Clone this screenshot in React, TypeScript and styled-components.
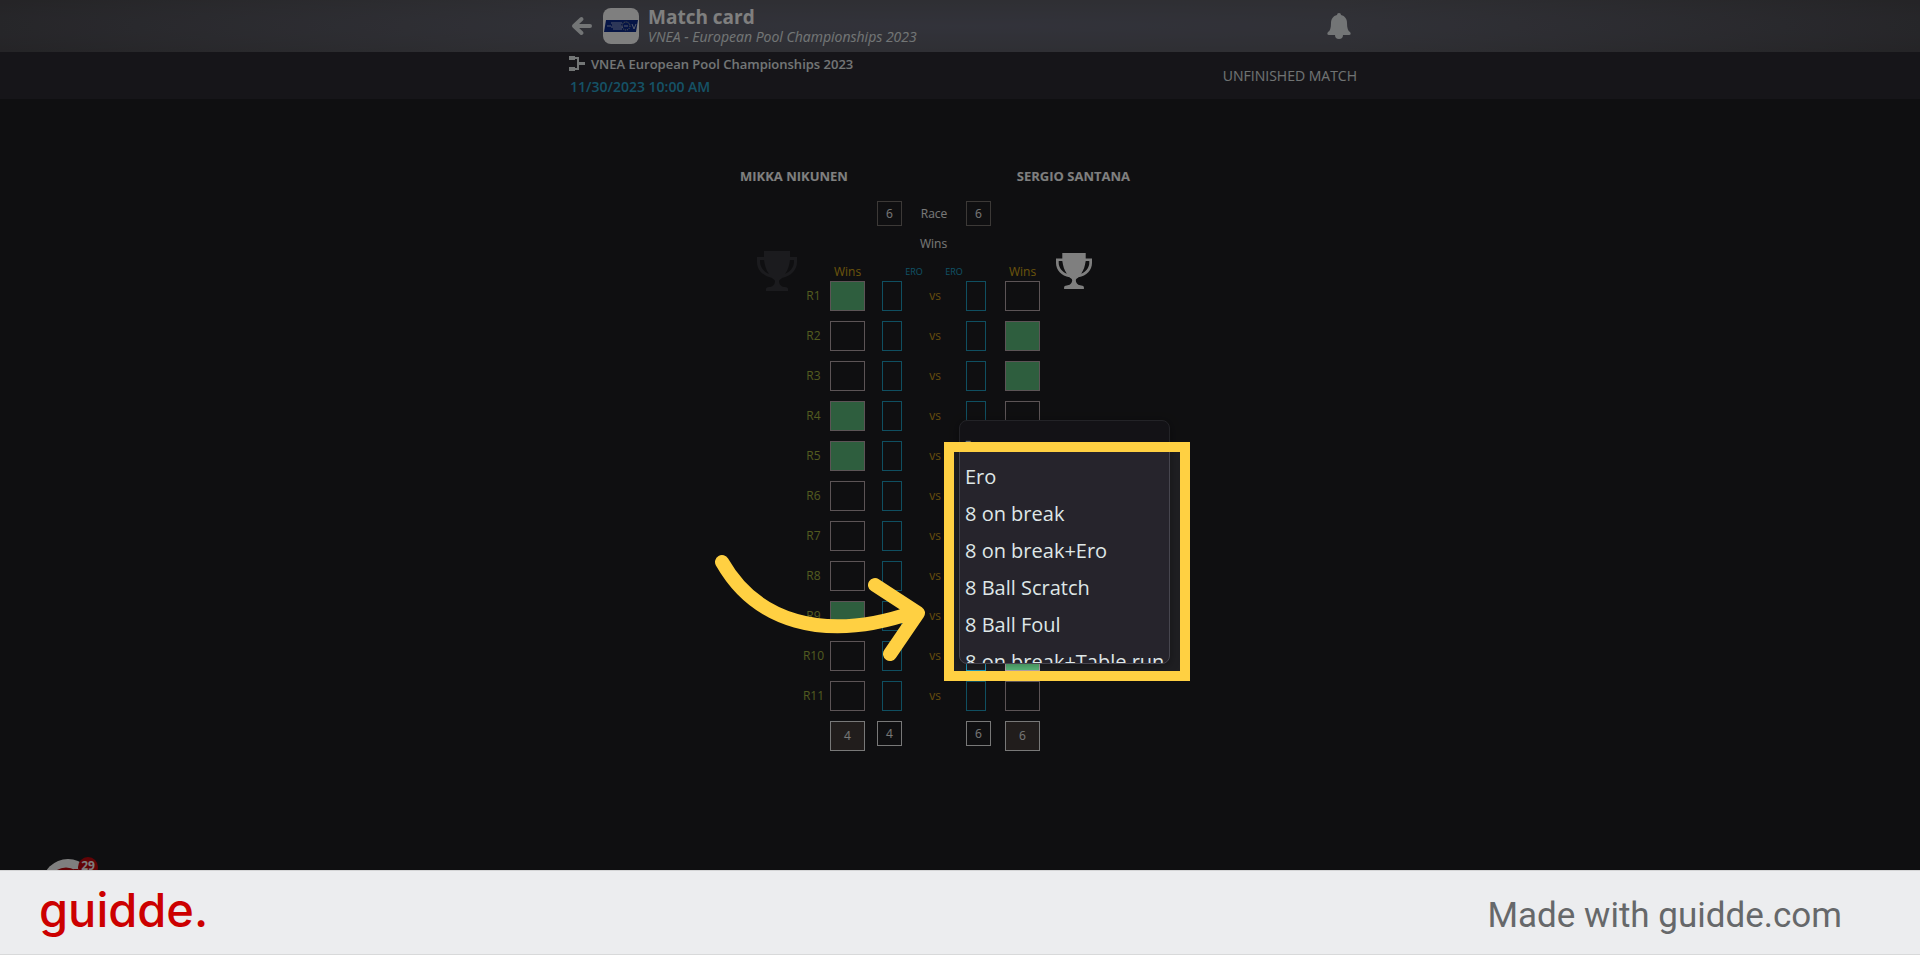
import React from 'react';
import styled, { createGlobalStyle } from 'styled-components';

const GlobalStyle = createGlobalStyle`
  * { box-sizing: border-box; }
  body { margin: 0; background: #1f1f22; font-family: 'Open Sans', 'Noto Sans', sans-serif; }
  button { font: inherit; color: inherit; background: none; border: 0; padding: 0; cursor: pointer; }
  h1, p, ul { margin: 0; padding: 0; }
`;

const Page = styled.div`
  display: flex;
  flex-direction: column;
  min-height: 100vh;
`;

const Stage = styled.div`
  position: relative;
  flex: 1;
  overflow: hidden;
  background: #1f1f22;
`;

const TopBar = styled.header`
  background:
    radial-gradient(ellipse 60% 80% at 50% 50%, rgba(112, 114, 140, 0.5), rgba(112, 114, 140, 0)),
    linear-gradient(90deg, #4a494e, #5a5a5f 30%, #5a5a5f 70%, #4a494e);
`;

const SubBar = styled.div`
  background: #2c2b33;
`;

const Column = styled.div<{ $height: number }>`
  display: flex;
  align-items: center;
  justify-content: space-between;
  max-width: 800px;
  height: ${(p) => p.$height}px;
  margin: 0 auto;
  padding: 0 3px 0 9px;
`;

const Brand = styled.div`
  display: flex;
  align-items: center;
  color: #fff;
`;

const TitleBlock = styled.div`
  padding-top: 2px;
`;

const IconButton = styled.button`
  display: flex;
  margin: 0 11px 0 2px;
  color: #e6eaec;
`;

const BellButton = styled(IconButton)`
  margin-right: 6px;
`;

const LogoTile = styled.div`
  display: flex;
  align-items: center;
  width: 36px;
  height: 36px;
  margin-right: 9px;
  border-radius: 8px;
  background: #fff;
`;

const Title = styled.h1`
  font-size: 19px;
  line-height: 20px;
  font-weight: 700;
`;

const Subtitle = styled.p`
  font-size: 14px;
  line-height: 20px;
  font-style: italic;
  font-weight: 400;
  color: #e6ecec;
`;

const EventName = styled.p`
  display: flex;
  align-items: center;
  gap: 6px;
  font-size: 13px;
  line-height: 22px;
  font-weight: 600;
  color: #e6ecec;
`;

const EventDate = styled.p`
  padding-left: 1px;
  font-size: 14px;
  line-height: 24px;
  font-weight: 600;
  color: #2aa4cc;
`;

const Status = styled.p`
  font-size: 14px;
  font-weight: 500;
  color: #e0e6e6;
`;

const Board = styled.main`
  position: relative;
  width: 450px;
  margin: 66px auto 0;
  color: #f0f0f0;
  font-size: 12px;
`;

const Names = styled.div`
  display: flex;
  justify-content: space-between;
  padding: 0 55px 0 5px;
  font-size: 13px;
  line-height: 22px;
  font-weight: 700;
  color: #ffffff;
`;

const Line = styled.div<{ $height: number }>`
  display: grid;
  grid-template-columns: 95px 35px 12px 25px 64px 25px 14px 35px;
  align-items: start;
  height: ${(p) => p.$height}px;
`;

const RaceLine = styled(Line)`
  margin-top: 14px;
`;

const HeadLine = styled(Line)`
  align-items: center;
  grid-template-columns: 95px 35px 38px 22px 18px 22px 40px 35px;
  text-align: center;
`;

const WinsCaption = styled.p`
  padding-right: 53px;
  font-size: 12px;
  line-height: 34px;
  text-align: center;
`;

const Gold = styled.span`
  color: #d6a818;
`;

const Ero = styled.span`
  color: #20a4cc;
  font-size: 9px;
`;

const Round = styled.span`
  justify-self: end;
  width: 33px;
  line-height: 30px;
  text-align: center;
  color: #a4b440;
`;

const Versus = styled.span`
  padding-left: 2px;
  line-height: 30px;
  text-align: center;
  color: #cc981c;
`;

const Race = styled.span`
  line-height: 25px;
  text-align: center;
`;

const Box = styled.span<{ $col: number; $tone?: 'grey' | 'light' }>`
  grid-column: ${(p) => p.$col};
  width: 25px;
  height: 25px;
  border: 1px solid ${(p) => (p.$tone === 'light' ? '#f0f0f0' : '#78736e')};
  line-height: 24px;
  text-align: center;
`;

const TotalBox = styled.span<{ $col: number }>`
  grid-column: ${(p) => p.$col};
  height: 30px;
  border: 1px solid #f0f0f0;
  background: #423b38;
  line-height: 28px;
  text-align: center;
`;

const WinCell = styled.button<{ $won: boolean }>`
  width: 35px;
  height: 30px;
  border: 1px solid #b8a8ac;
  background: ${(p) => (p.$won ? '#5cbc7c' : 'transparent')};
`;

const EroCell = styled.button<{ $side: 'left' | 'right' }>`
  grid-column: ${(p) => (p.$side === 'left' ? 4 : 6)};
  justify-self: ${(p) => (p.$side === 'left' ? 'end' : 'start')};
  width: 20px;
  height: 30px;
  border: 1px solid #1f9ec2;
`;

const Cup = styled.svg<{ $side: 'left' | 'right' }>`
  position: absolute;
  left: ${(p) => (p.$side === 'left' ? 22 : 321)}px;
  top: ${(p) => (p.$side === 'left' ? 86 : 88)}px;
  color: ${(p) => (p.$side === 'left' ? '#36363c' : '#ffffff')};
`;

const Menu = styled.ul`
  position: absolute;
  left: 224px;
  top: 255px;
  width: 211px;
  height: 244px;
  overflow: hidden;
  list-style: none;
  border: 1px solid #47464f;
  border-radius: 8px;
  background: #26242c;
  box-shadow: 0 2px 10px rgba(0, 0, 0, 0.35);
`;

const Option = styled.button`
  display: block;
  width: 100%;
  padding-left: 5px;
  font-size: 20px;
  line-height: 37px;
  font-weight: 500;
  text-align: left;
  white-space: nowrap;
  color: #dfe7e7;
`;

const Guide = styled.div`
  position: absolute;
  top: 165px;
  left: calc(50% - 225px);
  width: 450px;
  pointer-events: none;
`;

const Spotlight = styled.div`
  position: absolute;
  left: 209px;
  top: 277px;
  width: 246px;
  height: 239px;
  border: 10px solid #ffd042;
  box-shadow: 0 0 0 4000px rgba(0, 0, 0, 0.5);
`;

const Pointer = styled.svg`
  position: absolute;
  left: -25px;
  top: 385px;
`;

const Chat = styled.button`
  position: absolute;
  left: 42px;
  bottom: -41px;
  width: 52px;
  height: 52px;
`;

const ChatBadge = styled.span`
  position: absolute;
  left: 36px;
  top: -2px;
  width: 20px;
  height: 20px;
  border-radius: 10px;
  background: #c4060c;
  color: #fff;
  font-size: 12px;
  line-height: 18px;
  font-weight: 700;
`;

const Footer = styled.footer`
  display: flex;
  align-items: center;
  justify-content: space-between;
  height: 85px;
  padding: 0 78px 0 39px;
  border-top: 1px solid #d4d5d6;
  border-bottom: 1px solid #d8d9da;
  background: #ecedef;
`;

const Wordmark = styled.a`
  padding-bottom: 6px;
  font-family: Inter, sans-serif;
  font-size: 47px;
  line-height: 60px;
  font-weight: 500;
  color: #cc0000;
  text-decoration: none;
`;

const Credit = styled.p`
  padding-top: 7px;
  font-family: Roboto, sans-serif;
  font-size: 35px;
  line-height: 40px;
  color: #66686a;
`;

const CUP_PATH =
  'M7 0h26v6h7v5c0 8-6 14-15 16-1 1-3 2-3 3 0 4 3 6 6 6 2 0 3 1 3 2v2H9v-2c0-1 1-2 3-2 3 0 6-2 6-6 0-1-2-2-3-3C6 25 0 19 0 11V6h7zM3 9v2c0 5 4 10 9 12-3-4-4-8-5-14zm34 0h-4c-1 6-2 10-5 14 5-2 9-7 9-12z';

const rounds = [
  { left: true, right: false },
  { left: false, right: true },
  { left: false, right: true },
  { left: true, right: false },
  { left: true, right: false },
  { left: false, right: true },
  { left: false, right: true },
  { left: false, right: true },
  { left: true, right: false },
  { left: false, right: true },
  { left: false, right: false },
];

const options = ['-', 'Ero', '8 on break', '8 on break+Ero', '8 Ball Scratch', '8 Ball Foul', '8 on break+Table run'];

export default function App() {
  return (
    <Page>
      <GlobalStyle />
      <Stage>
        <TopBar>
          <Column $height={52}>
            <Brand>
              <IconButton aria-label="Back">
                <svg width="21" height="20" viewBox="0 0 21 20" fill="none" stroke="currentColor" strokeWidth="4" strokeLinecap="round" strokeLinejoin="round">
                  <path d="M10.500 3 3 10l7.500 7M4 10h15" />
                </svg>
              </IconButton>
              <LogoTile>
                <svg width="36" height="14" viewBox="0 0 36 14" role="img" aria-label="VNEA">
                  <path d="M3 1h32l-2 12H1z" fill="#0c2a8c" />
                  <ellipse cx="23" cy="7" rx="4" ry="4" fill="none" stroke="#c9c59a" strokeDasharray="1 1" />
                  <path d="M4 7h4M8 4h11M9 6h9M8 8h12M10 10h9M21 7h4M29 5l2 5 2-5" fill="none" stroke="#a9b4d4" />
                </svg>
              </LogoTile>
              <TitleBlock>
                <Title>Match card</Title>
                <Subtitle>VNEA - European Pool Championships 2023</Subtitle>
              </TitleBlock>
            </Brand>
            <BellButton aria-label="Notifications">
              <svg width="24" height="26" viewBox="0 0 24 26" fill="currentColor">
                <path d="M10 2a2 2 0 0 1 4 0c4 1 6 4 6 8 0 5 1 8 3 9 1 1 1 3-1 3h-6a4 4 0 0 1-8 0H2c-2 0-2-2-1-3 2-1 3-4 3-9 0-4 2-7 6-8z" />
              </svg>
            </BellButton>
          </Column>
        </TopBar>
        <SubBar>
          <Column $height={47}>
            <div>
              <EventName>
                <svg width="16" height="15" viewBox="0 0 16 15" fill="currentColor">
                  <path d="M0 0h6v1h4v5h6v3h-6v5H6v1H0v-4h6v1h2V3H6v1H0z" />
                </svg>
                VNEA European Pool Championships 2023
              </EventName>
              <EventDate>11/30/2023 10:00 AM</EventDate>
            </div>
            <Status>UNFINISHED MATCH</Status>
          </Column>
        </SubBar>

        <Board>
          <Names>
            <span>MIKKA NIKUNEN</span>
            <span>SERGIO SANTANA</span>
          </Names>
          <RaceLine $height={26}>
            <Box $col={4}>6</Box>
            <Race>Race</Race>
            <Box $col={6}>6</Box>
          </RaceLine>
          <WinsCaption>Wins</WinsCaption>
          <HeadLine $height={20}>
            <span />
            <Gold>Wins</Gold>
            <span />
            <Ero>ERO</Ero>
            <span />
            <Ero>ERO</Ero>
            <span />
            <Gold>Wins</Gold>
          </HeadLine>
          {rounds.map((r, i) => (
            <Line key={i} $height={40}>
              <Round>R{i + 1}</Round>
              <WinCell $won={r.left} aria-label={`Round ${i + 1}, Mikka Nikunen`} />
              <EroCell $side="left" aria-label={`Round ${i + 1} ERO, Mikka Nikunen`} />
              <Versus>vs</Versus>
              <EroCell $side="right" aria-label={`Round ${i + 1} ERO, Sergio Santana`} />
              <span />
              <WinCell $won={r.right} aria-label={`Round ${i + 1}, Sergio Santana`} />
            </Line>
          ))}
          <Line $height={30}>
            <TotalBox $col={2}>4</TotalBox>
            <Box $col={4} $tone="light">4</Box>
            <Box $col={6} $tone="light">6</Box>
            <TotalBox $col={8}>6</TotalBox>
          </Line>

          <Cup $side="left" width="40" height="40" viewBox="0 0 40 40" fill="currentColor" fillRule="evenodd"><path d={CUP_PATH} /></Cup>
          <Cup $side="right" width="36" height="36" viewBox="0 0 40 40" fill="currentColor" fillRule="evenodd"><path d={CUP_PATH} /></Cup>

          <Menu>
            {options.map((o) => (
              <li key={o}><Option>{o}</Option></li>
            ))}
          </Menu>
        </Board>
        <Chat aria-label="Help chat">
          <svg width="52" height="52" viewBox="0 0 52 52">
            <circle cx="26" cy="26" r="26" fill="#fff" />
            <circle cx="24" cy="26" r="15" fill="none" stroke="#c4060c" strokeWidth="5" />
            <path d="M34 10v30" stroke="#c4060c" strokeWidth="5" />
          </svg>
          <ChatBadge>29</ChatBadge>
        </Chat>
        <Guide>
          <Spotlight />
          <Pointer width="220" height="120" viewBox="0 0 220 120" fill="none" stroke="#ffd042" strokeWidth="14" strokeLinecap="round" strokeLinejoin="round">
            <path d="M12 12C45 70 112 94 204 62M165 35l43 28-28 41" />
          </Pointer>
        </Guide>
      </Stage>
      <Footer>
        <Wordmark href="#guidde">guidde.</Wordmark>
        <Credit>Made with guidde.com</Credit>
      </Footer>
    </Page>
  );
}
